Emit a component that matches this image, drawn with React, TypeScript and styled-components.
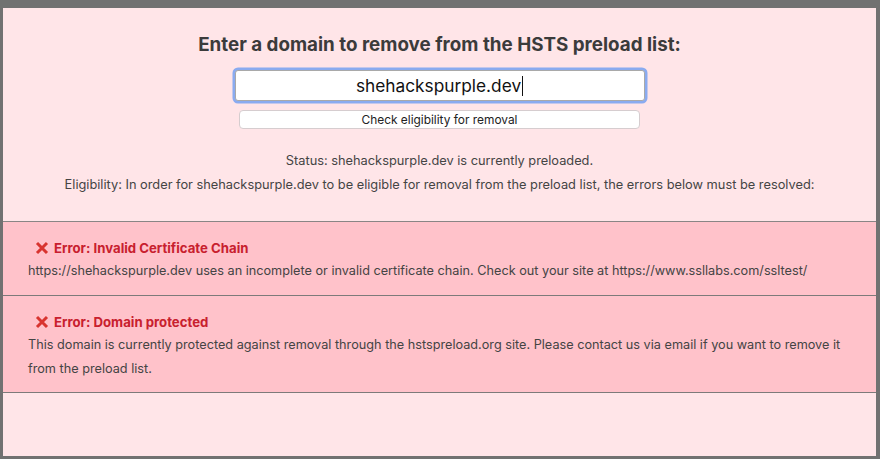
import React from "react";
import styled, { createGlobalStyle } from "styled-components";

const Global = createGlobalStyle`
  html, body { margin: 0; padding: 0; background: #717171; }
  body { font-family: Inter, "Noto Sans", "Liberation Sans", sans-serif; }
  * { box-sizing: border-box; }
`;

const Frame = styled.div`
  width: 880px;
  height: 459px;
  padding: 8px 4px 3px 3px;
  background: #717171;
`;

const Page = styled.main`
  height: 100%;
  background: #ffe5e8;
  display: flex;
  flex-direction: column;
  align-items: stretch;
`;

const Form = styled.section`
  display: flex;
  flex-direction: column;
  align-items: center;
  padding-top: 26px;
`;

const Title = styled.h1`
  margin: 0;
  font-size: 18.8px;
  line-height: 22px;
  font-weight: 700;
  color: #3b3b3b;
`;

const Field = styled.div`
  margin-top: 14px;
  width: 410px;
  height: 31px;
  background: #fff;
  border: 1px solid #a9a9a9;
  border-radius: 3px;
  box-shadow: 0 0 0 2.5px #8aabf0;
  display: flex;
  align-items: center;
  justify-content: center;
  font-size: 17.3px;
  color: #111;
`;

const Caret = styled.span`
  display: inline-block;
  width: 1px;
  height: 20px;
  background: #111;
  margin-left: 1px;
`;

const CheckButton = styled.button`
  margin-top: 9px;
  width: 401px;
  height: 19px;
  padding: 0;
  background: #fff;
  border: 1px solid #d6cdcf;
  border-radius: 4px;
  font-family: inherit;
  font-size: 11.9px;
  color: #222;
`;

const Info = styled.div`
  margin-top: 20px;
  display: flex;
  flex-direction: column;
  align-items: center;
  font-size: 12.8px;
  line-height: 24px;
  color: #444;
`;

const Results = styled.div`
  margin-top: 24px;
  border-top: 1px solid #8a8585;
`;

const ErrorBox = styled.div<{ $h: number }>`
  height: ${(p) => p.$h}px;
  background: #ffc2ca;
  border-bottom: 1px solid #7d7a7a;
  padding: 15px 25px 0 25px;
`;

const Heading = styled.div`
  display: flex;
  align-items: center;
  gap: 5px;
  padding-left: 7px;
  font-size: 13.2px;
  line-height: 22px;
  font-weight: 700;
  color: #c8202e;
`;

const Body = styled.p`
  margin: 0;
  font-size: 12.7px;
  line-height: 24px;
  color: #444;
`;

const XIcon = () => (
  <svg width="14" height="14" viewBox="0 0 14 14">
    <path d="M2 2 L12 12 M12 2 L2 12" stroke="#d8342f" strokeWidth="3" strokeLinecap="butt" />
  </svg>
);

export default function App() {
  return (
    <>
      <Global />
      <Frame>
        <Page>
          <Form>
            <Title>Enter a domain to remove from the HSTS preload list:</Title>
            <Field>
              shehackspurple.dev
              <Caret />
            </Field>
            <CheckButton>Check eligibility for removal</CheckButton>
          </Form>
          <Info>
            <div>Status: shehackspurple.dev is currently preloaded.</div>
            <div>
              Eligibility: In order for shehackspurple.dev to be eligible for removal from the preload list, the
              errors below must be resolved:
            </div>
          </Info>
          <Results>
            <ErrorBox $h={74}>
              <Heading>
                <XIcon />
                Error: Invalid Certificate Chain
              </Heading>
              <Body>
                https://shehackspurple.dev uses an incomplete or invalid certificate chain. Check out your site at
                https://www.ssllabs.com/ssltest/
              </Body>
            </ErrorBox>
            <ErrorBox $h={97}>
              <Heading>
                <XIcon />
                Error: Domain protected
              </Heading>
              <Body>
                This domain is currently protected against removal through the hstspreload.org site. Please contact us
                via email if you want to remove it from the preload list.
              </Body>
            </ErrorBox>
          </Results>
        </Page>
      </Frame>
    </>
  );
}
